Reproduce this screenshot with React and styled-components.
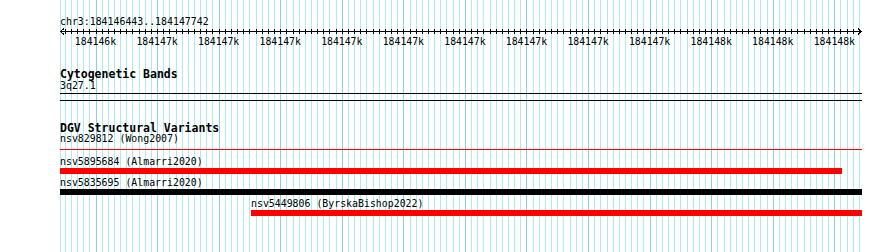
import React from "react";
import styled, { createGlobalStyle } from "styled-components";

const GlobalStyle = createGlobalStyle`
  html, body {
    margin: 0;
    padding: 0;
    background: #fff;
  }
`;

// track area spans x 60..862
const TRACK_W = 802;
const MAJOR_X = 35.5; // first major tick, relative to track start
const STEP = 6.157;

const gridLines = [];
for (let i = -5; i <= 124; i++) {
  const x = Math.round(MAJOR_X + STEP * i);
  if (x < 1 || x > TRACK_W - 2) continue;
  gridLines.push({ x: x + 0.5, major: i % 10 === 0 });
}

const labels = [
  "184146k", "184147k", "184147k", "184147k", "184147k", "184147k", "184147k",
  "184147k", "184147k", "184147k", "184148k", "184148k", "184148k",
];

const variants = [
  { id: "nsv829812", study: "Wong2007", start: 0, end: 802, color: "#ff0000", thin: true },
  { id: "nsv5895684", study: "Almarri2020", start: 0, end: 782, color: "#ff0000" },
  { id: "nsv5835695", study: "Almarri2020", start: 0, end: 802, color: "#000000" },
  { id: "nsv5449806", study: "ByrskaBishop2022", start: 191, end: 802, color: "#ff0000" },
];

const Guides = () => (
  <GridSvg width={TRACK_W} height={252}>
    <line x1={0.5} y1={0} x2={0.5} y2={252} stroke="#aeeaef" />
    {gridLines.map((g, i) => (
      <line key={i} x1={g.x} y1={0} x2={g.x} y2={252} stroke={g.major ? "#8ccdea" : "#aeeaef"} />
    ))}
  </GridSvg>
);

const Ruler = () => (
  <RulerSvg width={TRACK_W} height={21}>
    <line x1={0} y1={4.5} x2={TRACK_W} y2={4.5} stroke="#000" />
    <polyline points="4,1.5 0.5,4.5 4,7.5" fill="none" stroke="#000" />
    <polyline points={`${TRACK_W - 4},1.5 ${TRACK_W - 0.5},4.5 ${TRACK_W - 4},7.5`} fill="none" stroke="#000" />
    {gridLines.map((g, i) => (
      <line key={i} x1={g.x} y1={2} x2={g.x} y2={7} stroke="#000" />
    ))}
    {labels.map((t, i) => (
      <text key={i} x={MAJOR_X + 61.57 * i} y={18} textAnchor="middle">
        {t}
      </text>
    ))}
  </RulerSvg>
);

const App = () => {
  return (
    <>
      <GlobalStyle />
      <Page>
        <Guides />
        <Tracks>
          <Position>chr3:184146443..184147742</Position>
          <Ruler />

          <TrackTitle $top={21}>Cytogenetic Bands</TrackTitle>
          <Label $top={1}>3q27.1</Label>
          <Rule $top={2} />
          <Rule $top={6} />

          <TrackTitle $top={22}>DGV Structural Variants</TrackTitle>
          {variants.map((v, i) => (
            <Feature key={v.id} $start={v.start} $first={i === 0}>
              <Label>
                {v.id} ({v.study})
              </Label>
              <Bar $w={v.end - v.start} $color={v.color} $thin={v.thin} />
            </Feature>
          ))}
        </Tracks>
      </Page>
    </>
  );
};

export default App;

const Page = styled.div`
  position: relative;
  width: 890px;
  height: 252px;
  overflow: hidden;
  padding-left: 60px;
  box-sizing: border-box;
  background: #fff;
  font-family: "DejaVu Sans Mono", "Liberation Mono", monospace;
  color: #000;
`;

const GridSvg = styled.svg`
  position: absolute;
  left: 60px;
  top: 0;
  shape-rendering: crispEdges;
`;

const Tracks = styled.div`
  position: relative;
  width: ${TRACK_W}px;
  display: flex;
  flex-direction: column;
  padding-top: 17px;
`;

const Position = styled.div`
  font-size: 9.9px;
  line-height: 10px;
  height: 10px;
`;

const RulerSvg = styled.svg`
  display: block;
  shape-rendering: crispEdges;
  & text {
    font-family: "DejaVu Sans Mono", "Liberation Mono", monospace;
    font-size: 9.8px;
    fill: #000;
  }
`;

const TrackTitle = styled.div`
  margin-top: ${(p) => p.$top}px;
  font-size: 11.5px;
  font-weight: bold;
  line-height: 11px;
  height: 11px;
`;

const Label = styled.div`
  margin-top: ${(p) => p.$top || 0}px;
  font-size: 9.9px;
  line-height: 10px;
  height: 10px;
  white-space: nowrap;
`;

const Rule = styled.div`
  margin-top: ${(p) => p.$top}px;
  height: 1px;
  background: #000;
`;

const Feature = styled.div`
  display: flex;
  flex-direction: column;
  margin-left: ${(p) => p.$start}px;
  margin-top: ${(p) => (p.$first ? 0 : 4)}px;
`;

const Bar = styled.div`
  width: ${(p) => p.$w}px;
  height: ${(p) => (p.$thin ? 1 : 6)}px;
  margin-top: ${(p) => (p.$thin ? 5 : 1)}px;
  margin-bottom: ${(p) => (p.$thin ? 3 : 0)}px;
  background: ${(p) => p.$color};
`;
